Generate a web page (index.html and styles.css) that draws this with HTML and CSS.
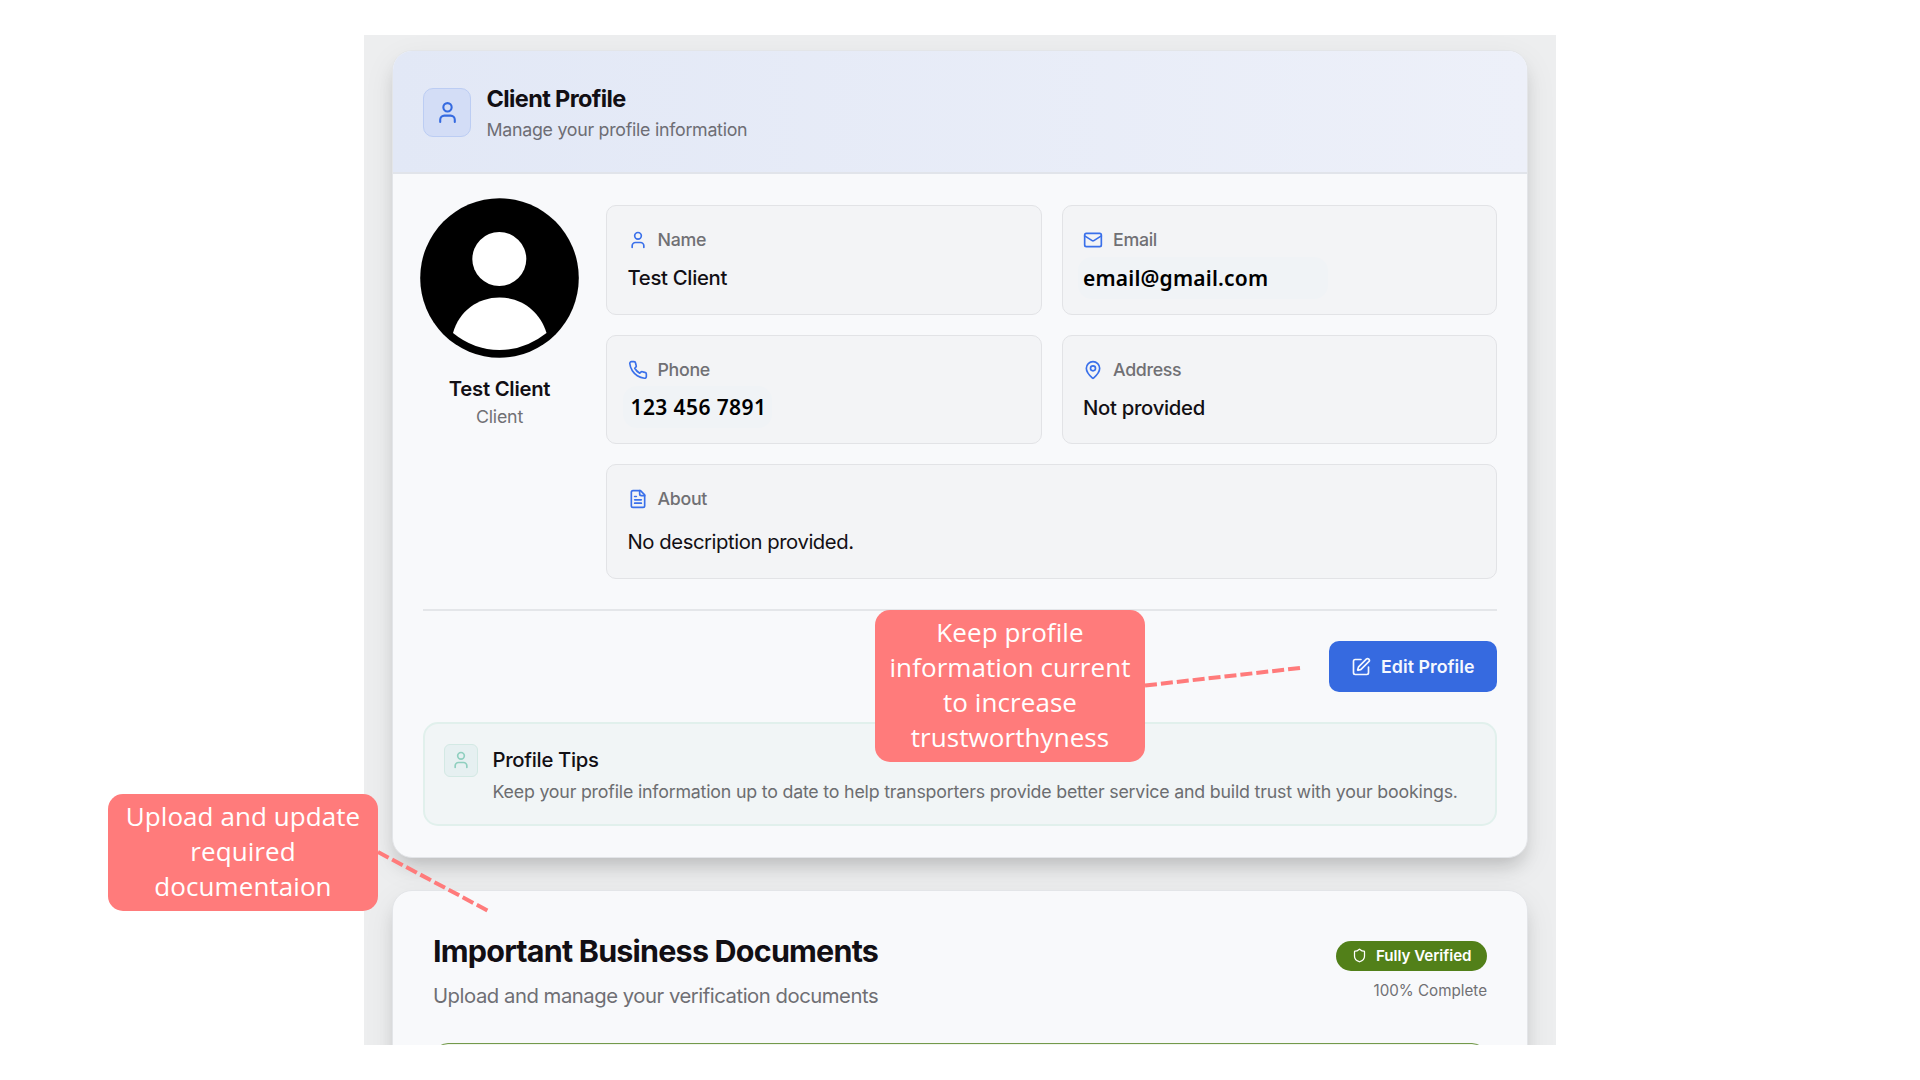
FILE: index.html
```html
<!DOCTYPE html>
<html lang="en">
<head>
<meta charset="utf-8">
<title>Client Profile</title>
<link rel="stylesheet" href="styles.css">
</head>
<body>
<svg class="sprite" width="0" height="0" aria-hidden="true">
  <symbol id="user" viewBox="0 0 24 24"><path d="M19 21v-2a4 4 0 0 0-4-4H9a4 4 0 0 0-4 4v2"/><circle cx="12" cy="7" r="4"/></symbol>
  <symbol id="mail" viewBox="0 0 24 24"><rect x="2" y="4" width="20" height="16" rx="2"/><path d="m22 7-8.97 5.7a1.94 1.94 0 0 1-2.06 0L2 7"/></symbol>
  <symbol id="phone" viewBox="0 0 24 24"><path d="M22 16.92v3a2 2 0 0 1-2.18 2 19.79 19.79 0 0 1-8.63-3.07 19.5 19.5 0 0 1-6-6 19.79 19.79 0 0 1-3.07-8.67A2 2 0 0 1 4.11 2h3a2 2 0 0 1 2 1.72 12.84 12.84 0 0 0 .7 2.81 2 2 0 0 1-.45 2.11L8.09 9.91a16 16 0 0 0 6 6l1.27-1.27a2 2 0 0 1 2.11-.45 12.84 12.84 0 0 0 2.81.7A2 2 0 0 1 22 16.92z"/></symbol>
  <symbol id="pin" viewBox="0 0 24 24"><path d="M20 10c0 4.993-5.539 10.193-7.399 11.799a1 1 0 0 1-1.202 0C9.539 20.193 4 14.993 4 10a8 8 0 0 1 16 0"/><circle cx="12" cy="10" r="3"/></symbol>
  <symbol id="file" viewBox="0 0 24 24"><path d="M15 2H6a2 2 0 0 0-2 2v16a2 2 0 0 0 2 2h12a2 2 0 0 0 2-2V7Z"/><path d="M14 2v4a2 2 0 0 0 2 2h4"/><path d="M10 9H8"/><path d="M16 13H8"/><path d="M16 17H8"/></symbol>
  <symbol id="edit" viewBox="0 0 24 24"><path d="M12 3H5a2 2 0 0 0-2 2v14a2 2 0 0 0 2 2h14a2 2 0 0 0 2-2v-7"/><path d="M18.375 2.625a1 1 0 0 1 3 3l-9.013 9.014a2 2 0 0 1-.853.505l-2.873.84a.5.5 0 0 1-.62-.62l.84-2.873a2 2 0 0 1 .506-.852z"/></symbol>
  <symbol id="shield" viewBox="0 0 24 24"><path d="M20 13c0 5-3.5 7.5-7.66 8.95a1 1 0 0 1-.67-.01C7.5 20.5 4 18 4 13V6a1 1 0 0 1 1-1c2 0 4.5-1.2 6.24-2.72a1.17 1.17 0 0 1 1.52 0C14.51 3.81 17 5 19 5a1 1 0 0 1 1 1z"/></symbol>
</svg>

<main class="frame">
  <section class="card">
    <header class="card-header">
      <div class="header-icon"><svg class="icon"><use href="#user"/></svg></div>
      <div>
        <h1 class="title">Client Profile</h1>
        <p class="subtitle">Manage your profile information</p>
      </div>
    </header>

    <div class="profile">
      <aside class="identity">
        <svg class="avatar" viewBox="0 0 159 160">
          <ellipse cx="79.5" cy="80" rx="79.3" ry="79.8" fill="#000"/>
          <circle cx="79.3" cy="61" r="27" fill="#fff"/>
          <path d="M33 135C39 113 58 99.500 79.500 99.500S120 113 126.500 135Q105 152 79.500 152T33 135Z" fill="#fff"/>
        </svg>
        <p class="identity-name">Test Client</p>
        <p class="identity-role">Client</p>
      </aside>

      <div class="fields">
        <div class="field">
          <div class="label"><svg class="icon"><use href="#user"/></svg>Name</div>
          <p class="value">Test Client</p>
        </div>
        <div class="field">
          <div class="label"><svg class="icon"><use href="#mail"/></svg>Email</div>
          <p class="value masked masked-email">email@gmail.com</p>
        </div>
        <div class="field">
          <div class="label"><svg class="icon"><use href="#phone"/></svg>Phone</div>
          <p class="value masked masked-phone">123 456 7891</p>
        </div>
        <div class="field">
          <div class="label"><svg class="icon"><use href="#pin"/></svg>Address</div>
          <p class="value">Not provided</p>
        </div>
        <div class="field field-wide">
          <div class="label"><svg class="icon"><use href="#file"/></svg>About</div>
          <p class="value">No description provided.</p>
        </div>
      </div>
    </div>

    <div class="actions">
      <button class="edit"><svg class="icon"><use href="#edit"/></svg>Edit Profile</button>
    </div>

    <div class="tips">
      <div class="tips-icon"><svg class="icon"><use href="#user"/></svg></div>
      <div>
        <h2 class="tips-title">Profile Tips</h2>
        <p class="tips-text">Keep your profile information up to date to help transporters provide better service and build trust with your bookings.</p>
      </div>
    </div>
  </section>

  <section class="card documents">
    <div class="documents-head">
      <div>
        <h2 class="documents-title">Important Business Documents</h2>
        <p class="documents-sub">Upload and manage your verification documents</p>
      </div>
      <div class="status">
        <span class="badge"><svg class="icon"><use href="#shield"/></svg>Fully Verified</span>
        <span class="progress">100% Complete</span>
      </div>
    </div>
    <div class="document-box"></div>
  </section>
</main>

<svg class="connectors" width="1920" height="1080">
  <path d="M1145 685.500 1300 668"/>
  <path d="M378 852 487.500 910.500"/>
</svg>
<div class="callout callout-profile">Keep profile<br>information current<br>to increase<br>trustworthyness</div>
<div class="callout callout-documents">Upload and update<br>required<br>documentaion</div>
</body>
</html>
```
FILE: styles.css
```css
* { box-sizing: border-box; margin: 0; }

body {
  width: 1920px;
  height: 1080px;
  padding: 35px 364px 35px 363.5px;
  overflow: hidden;
  background: #fff;
  color: #120f14;
  font-family: Inter, "Liberation Sans", sans-serif;
  position: relative;
}

.sprite { position: absolute; }

.icon {
  flex: none;
  width: 20px;
  height: 20px;
  fill: none;
  stroke: currentColor;
  stroke-width: 2;
  stroke-linecap: round;
  stroke-linejoin: round;
}

.frame {
  height: 1010px;
  padding: 15px 28.5px 0;
  overflow: hidden;
  background: #edeeef;
}

.card {
  border: 1px solid #e3e5e8;
  border-radius: 20px;
  background: #f8f9fb;
  box-shadow: 0 10px 32px rgba(0, 0, 0, .07), 0 12px 18px -5px rgba(0, 0, 0, .16);
}

.card-header {
  display: flex;
  align-items: center;
  gap: 15.500px;
  height: 123px;
  padding: 2px 30px 0;
  border-bottom: 2px solid #e1e4ea;
  border-radius: 19px 19px 0 0;
  background: linear-gradient(90deg, #e2e8f6, #edf0f9);
}

.header-icon {
  display: grid;
  place-items: center;
  width: 48px;
  height: 49px;
  border: 1.5px solid #bccdf3;
  border-radius: 10px;
  background: #d3ddf6;
  color: #356ae0;
}
.header-icon .icon { width: 25px; height: 25px; }

.title { font-size: 23.5px; font-weight: 700; line-height: 34px; letter-spacing: -.62px; }
.subtitle { margin-top: 1px; color: #6d6d74; font-size: 17.8px; line-height: 26px; letter-spacing: -.27px; }

.profile {
  display: flex;
  align-items: flex-start;
  gap: 27px;
  padding: 24px 29.5px 0 27px;
}

.identity { flex: none; width: 159px; text-align: center; }
.avatar { display: block; width: 159px; height: 160px; }
.identity-name { margin-top: 17px; font-size: 20.3px; font-weight: 600; line-height: 28px; letter-spacing: -.25px; }
.identity-role { margin-top: 2px; color: #707074; font-size: 17.8px; line-height: 24px; letter-spacing: -.2px; }

.fields {
  flex: 1;
  display: grid;
  grid-template-columns: 1fr 1fr;
  gap: 20px;
  margin-top: 7px;
}
.field {
  height: 109.500px;
  padding: 22px 20.500px 0;
  border: 1px solid #e2e3e6;
  border-radius: 10px;
  background: #f3f4f6;
}
.field-wide { grid-column: span 2; height: 114.500px; }
.field-wide .value { margin-top: 17px; font-weight: 400; letter-spacing: -.44px; }

.label {
  display: flex;
  align-items: center;
  gap: 10px;
  color: #707074;
  font-size: 17.8px;
  font-weight: 500;
  line-height: 24px;
  letter-spacing: -.32px;
}
.label .icon { color: #3a70ea; }

.value {
  margin-top: 12px;
  font-size: 20.3px;
  font-weight: 500;
  line-height: 28px;
  letter-spacing: -.3px;
}
.masked {
  position: relative;
  z-index: 0;
  top: -.5px;
  color: #000;
  font-family: "Noto Sans", "Open Sans", sans-serif;
  font-size: 21px;
  font-weight: 600;
  letter-spacing: .19px;
}
.masked::before {
  content: "";
  position: absolute;
  z-index: -1;
  top: -7px;
  left: -5px;
  width: 149px;
  height: 42px;
  border-radius: 14px;
  background: #f0f3f6;
}
.masked-email::before { width: 250px; }
.masked-phone { padding-left: 3px; letter-spacing: .4px; }

.actions {
  display: flex;
  justify-content: flex-end;
  margin: 30.500px 29.500px 0;
  padding-top: 30px;
  border-top: 2px solid #e4e6e9;
}
.edit {
  display: flex;
  align-items: center;
  gap: 10px;
  width: 168px;
  height: 51px;
  padding: 0 22px;
  border: 0;
  border-radius: 10px;
  background: #366ae0;
  color: #f5f8fe;
  font: 600 17.8px/24px Inter, sans-serif;
  letter-spacing: .04px;
  white-space: nowrap;
}

.tips {
  display: flex;
  gap: 15px;
  height: 104px;
  margin: 30px 29.500px 30.500px;
  padding: 19.500px 19.500px;
  border: 2px solid #e1f0ec;
  border-radius: 15px;
  background: #f1f5f6;
}
.tips-icon {
  display: grid;
  place-items: center;
  width: 33.500px;
  height: 33.500px;
  border: 1.5px solid #d3e9e4;
  border-radius: 6px;
  background: #e6f0f1;
  color: #8fcfbf;
}
.tips-title { margin-top: 2px; font-size: 20.3px; font-weight: 500; line-height: 28px; letter-spacing: -.3px; }
.tips-text { margin-top: 6px; color: #6c6d70; font-size: 17.8px; line-height: 24px; letter-spacing: -.195px; white-space: nowrap; }

.documents { height: 300px; margin-top: 32px; padding: 40.500px 39.500px 0; }
.documents-head { display: flex; justify-content: space-between; }
.documents-title { margin-left: .5px; font-size: 30.500px; font-weight: 700; line-height: 40px; letter-spacing: -.8px; }
.documents-sub { margin: 10.500px 0 0 .5px; color: #6f6f74; font-size: 20.3px; line-height: 28px; letter-spacing: -.47px; }

.status { display: flex; flex-direction: column; align-items: flex-end; padding-top: 9.500px; }
.badge {
  display: flex;
  align-items: center;
  gap: 9px;
  height: 30.500px;
  padding: 0 15.500px;
  border-radius: 16px;
  background: #528019;
  color: #fff;
  font-size: 15.2px;
  font-weight: 600;
  letter-spacing: -.05px;
}
.badge .icon { width: 15px; height: 15px; }
.progress { margin-top: 10px; color: #707074; font-size: 15.2px; line-height: 20px; }
.document-box { height: 150px; margin-top: 33px; border: 1.5px solid #73994b; border-radius: 15px; background: #f0f5ec; }

.connectors { position: absolute; top: 0; left: 0; fill: none; stroke: #ff7b7b; stroke-width: 4; stroke-dasharray: 12 4; }

.callout {
  position: absolute;
  width: 270px;
  border-radius: 15px;
  background: #ff7b7b;
  color: #fff;
  font-family: "Open Sans", "Noto Sans", sans-serif;
  font-size: 26px;
  line-height: 35px;
  letter-spacing: .07px;
  text-align: center;
}
.callout-profile { top: 610px; left: 875px; height: 151.500px; padding-top: 5px; }
.callout-documents { top: 794px; left: 108px; height: 117px; padding-top: 5px; }
```
